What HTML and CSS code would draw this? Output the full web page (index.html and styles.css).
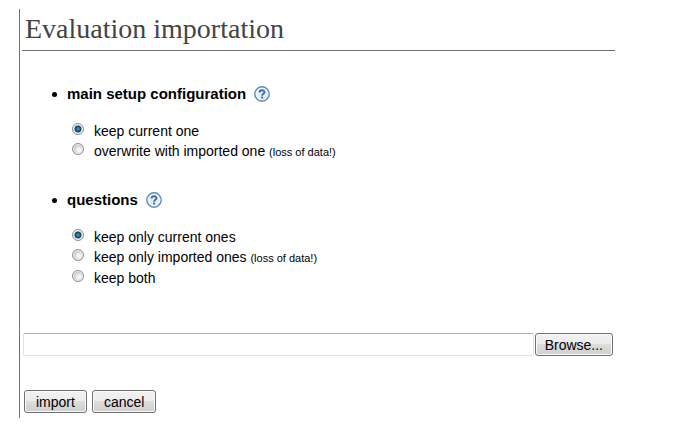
FILE: index.html
```html
<!DOCTYPE html>
<html lang="en">
<head>
<meta charset="utf-8">
<title>Evaluation importation</title>
<link rel="stylesheet" href="styles.css">
</head>
<body>
<svg class="defs" aria-hidden="true">
  <symbol id="help" viewBox="0 0 16 16">
    <circle cx="8" cy="8" r="7.2" fill="#f4f8fc" stroke="#5b8cbc" stroke-width="1.4"/>
    <circle cx="8" cy="8" r="5.6" fill="#e6eff8"/>
    <path d="M5.6 6.4C5.6 3.5 10.5 3.6 10.5 6.2C10.5 7.8 8.1 7.8 8.1 9.7" fill="none" stroke="#3a6fa8" stroke-width="1.9"/>
    <rect x="7.1" y="10.6" width="2" height="1.9" fill="#3a6fa8"/>
  </symbol>
</svg>
<main class="page">
  <h1 class="title">Evaluation importation</h1>
  <form class="form">
    <ul class="groups">
      <li class="group">
        <div class="group-head"><h2 class="group-title" id="setup">main setup configuration</h2><a class="help" href="#setup" aria-label="Help"><svg><use href="#help"/></svg></a></div>
        <div class="options" role="radiogroup" aria-labelledby="setup">
          <label class="option"><input class="radio" type="radio" name="setup" checked><span>keep current one</span></label>
          <label class="option"><input class="radio" type="radio" name="setup"><span>overwrite with imported one <small class="note">(loss of data!)</small></span></label>
        </div>
      </li>
      <li class="group">
        <div class="group-head"><h2 class="group-title" id="questions">questions</h2><a class="help" href="#questions" aria-label="Help"><svg><use href="#help"/></svg></a></div>
        <div class="options" role="radiogroup" aria-labelledby="questions">
          <label class="option"><input class="radio" type="radio" name="questions" checked><span>keep only current ones</span></label>
          <label class="option"><input class="radio" type="radio" name="questions"><span>keep only imported ones <small class="note">(loss of data!)</small></span></label>
          <label class="option"><input class="radio" type="radio" name="questions"><span>keep both</span></label>
        </div>
      </li>
    </ul>
    <div class="file">
      <input class="file-path" type="text" aria-label="File to import">
      <button class="button browse" type="button">Browse...</button>
    </div>
    <div class="actions">
      <button class="button" type="submit">import</button>
      <button class="button" type="button">cancel</button>
    </div>
  </form>
</main>
</body>
</html>
```
FILE: styles.css
```css
* { box-sizing: border-box; }

body {
  margin: 0;
  background: #fff;
  color: #000;
  font: 14px/20px "Liberation Sans", Arial, sans-serif;
}

.defs { position: absolute; width: 0; height: 0; }

.page {
  margin: 9px 63px 0 19px;
  padding: 0 0 5px 2px;
  border-left: 1px solid #707070;
}

.title {
  margin: 0;
  padding: 4px 3px 5px;
  border-bottom: 1px solid #707070;
  color: #444;
  font: 28px/32px "Liberation Serif", "Times New Roman", serif;
}

.groups {
  margin: 0;
  padding: 33px 0 0 30px;
  list-style: none;
}

.group { margin-bottom: 28px; }

.group-head {
  display: flex;
  align-items: center;
  height: 20px;
}

.group-head::before {
  width: 5px;
  height: 5px;
  margin-right: 10px;
  border-radius: 50%;
  background: #000;
  content: "";
}

.group-title {
  margin: 0;
  font-size: 15px;
  line-height: 20px;
}

.help { display: flex; margin-left: 8px; }
.help svg { width: 16px; height: 16px; }

.options {
  display: flex;
  flex-direction: column;
  padding: 17px 0 0 20px;
}

.option { display: flex; }

.radio {
  appearance: none;
  width: 12px;
  height: 12px;
  margin: 2px 10px 0 0;
  border: 1px solid #8e8f8f;
  border-radius: 50%;
  background: radial-gradient(circle at 60% 60%, #f4f4f4 20%, #c9cccf 55%);
  box-shadow: inset 0 0 0 1px #f4f4f4;
}

.radio:checked {
  background: radial-gradient(circle at 50% 50%, #3fa5d4 0, #123f5c 3px, #dfe5e8 4px);
}

.note { font-size: 11px; }

.file {
  display: flex;
  gap: 1px;
  padding: 17px 2px 0 1px;
}

.file-path {
  flex: 1;
  min-width: 0;
  height: 23px;
  border: 1px solid #e2e3ea;
  border-top-color: #abadb3;
  border-radius: 2px;
  background: #fff;
  font: inherit;
}

.button {
  height: 23px;
  padding: 0 11px;
  border: 1px solid #707070;
  border-radius: 3px;
  background: linear-gradient(#f2f2f2 0%, #ebebeb 50%, #dddddd 50%, #cfcfcf 100%);
  box-shadow: inset 0 0 0 1px #fafafa;
  color: #000;
  font: 14px/20px "Liberation Sans", Arial, sans-serif;
}

.browse { padding: 0 9px; }

.actions {
  display: flex;
  gap: 5px;
  padding: 34px 0 0 2px;
}
```
